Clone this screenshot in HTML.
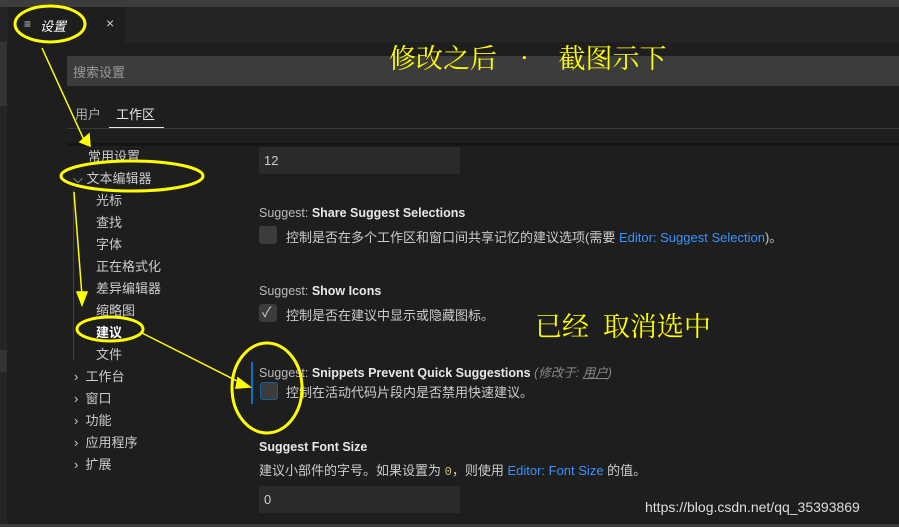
<!DOCTYPE html>
<html><head><meta charset="utf-8"><style>
*{margin:0;padding:0;box-sizing:border-box}
body{width:899px;height:527px;overflow:hidden;background:#1e1e1e;position:relative;font-family:"Liberation Sans","Noto Sans CJK SC",sans-serif;color:#ccc;font-size:13px}
.a{position:absolute;white-space:nowrap}
.t{font-size:13px;color:#ccc}
.h{font-size:12.5px;color:#bbb}
.h b{color:#e7e7e7}
.cb{position:absolute;width:18px;height:18px;background:#3c3c3c;border-radius:3px}
.link{color:#3794ff}
.y{color:#ffff00;font-family:"Noto Serif CJK SC","Liberation Serif",serif;font-size:27px}
</style></head><body>
<div class="a" style="left:0;top:0;width:899px;height:7px;background:#3c3c3c"></div>
<div class="a" style="left:0;top:7px;width:899px;height:35px;background:#252526"></div>
<div class="a" style="left:8px;top:7px;width:117px;height:35px;background:#1e1e1e"></div>
<div class="a" style="left:0;top:42px;width:7px;height:485px;background:#252526"></div>
<div class="a" style="left:0;top:42px;width:7px;height:64px;background:#333"></div>
<div class="a" style="left:0;top:350px;width:7px;height:22px;background:#333"></div>
<div class="a" style="left:24px;top:17px;color:#ccc;font-size:12px">≡</div>
<div class="a" style="left:40px;top:16px;font-style:italic;color:#fff;font-size:13px">设置</div>
<div class="a" style="left:106px;top:15px;color:#ccc;font-size:14px">×</div>
<div class="a" style="left:67px;top:56px;width:832px;height:30px;background:#3c3c3c"></div>
<div class="a" style="left:73px;top:62px;color:#999;font-size:13px">搜索设置</div>
<div class="a t" style="left:75px;top:104px;color:#aaa">用户</div>
<div class="a t" style="left:116px;top:104px;color:#e7e7e7">工作区</div>
<div class="a" style="left:109px;top:127px;width:55px;height:1px;background:#e7e7e7"></div>
<div class="a" style="left:67px;top:128px;width:832px;height:1px;background:#3a3a3a"></div>
<div class="a" style="left:67px;top:143px;width:832px;height:3px;background:#151515"></div>
<div class="a t" style="left:88px;top:146px">常用设置</div>
<div class="a t" style="left:73px;top:168px">⌵ 文本编辑器</div>
<div class="a" style="left:73px;top:190px;width:1px;height:170px;background:#444"></div>
<div class="a t" style="left:96px;top:190px">光标</div>
<div class="a t" style="left:96px;top:212px">查找</div>
<div class="a t" style="left:96px;top:234px">字体</div>
<div class="a t" style="left:96px;top:256px">正在格式化</div>
<div class="a t" style="left:96px;top:278px">差异编辑器</div>
<div class="a t" style="left:96px;top:300px">缩略图</div>
<div class="a t" style="left:96px;top:322px;font-weight:bold;color:#fff">建议</div>
<div class="a t" style="left:96px;top:344px">文件</div>
<div class="a t" style="left:74px;top:366px">›&nbsp; 工作台</div>
<div class="a t" style="left:74px;top:388px">›&nbsp; 窗口</div>
<div class="a t" style="left:74px;top:410px">›&nbsp; 功能</div>
<div class="a t" style="left:74px;top:432px">›&nbsp; 应用程序</div>
<div class="a t" style="left:74px;top:454px">›&nbsp; 扩展</div>
<div class="a" style="left:259px;top:147px;width:201px;height:27px;background:#2a2a2a"></div>
<div class="a t" style="left:264px;top:153px">12</div>
<div class="a h" style="left:259px;top:206px">Suggest: <b>Share Suggest Selections</b></div>
<div class="cb" style="left:259px;top:226px"></div>
<div class="a t" style="left:286px;top:227px">控制是否在多个工作区和窗口间共享记忆的建议选项(需要 <span class="link">Editor: Suggest Selection</span>)。</div>
<div class="a h" style="left:259px;top:284px">Suggest: <b>Show Icons</b></div>
<div class="cb" style="left:259px;top:304px"></div>
<div class="a" style="left:262px;top:302px;color:#ccc;font-size:14px">✓</div>
<div class="a t" style="left:286px;top:305px">控制是否在建议中显示或隐藏图标。</div>
<div class="a" style="left:251px;top:362px;width:2px;height:42px;background:#0e70c0"></div>
<div class="a h" style="left:259px;top:362px">Suggest: <b>Snippets Prevent Quick Suggestions</b> <i style="color:#888">(修改于: <u>用户</u>)</i></div>
<div class="cb" style="left:260px;top:382px;border:1px solid #0e639c"></div>
<div class="a t" style="left:286px;top:382px">控制在活动代码片段内是否禁用快速建议。</div>
<div class="a h" style="left:259px;top:440px"><b>Suggest Font Size</b></div>
<div class="a t" style="left:259px;top:460px">建议小部件的字号。如果设置为 <span style="color:#d7ba7d;font-family:'Liberation Mono',monospace;font-size:12px">0</span>，则使用 <span class="link">Editor: Font Size</span> 的值。</div>
<div class="a" style="left:259px;top:486px;width:201px;height:27px;background:#2a2a2a"></div>
<div class="a t" style="left:264px;top:492px">0</div>
<div class="a" style="left:0;top:524px;width:899px;height:3px;background:#3c3c3c"></div>
<div class="a y" style="left:389px;top:37px">修改之后 &nbsp;• &nbsp;&nbsp;截图示下</div>
<div class="a y" style="left:535px;top:305px">已经 &nbsp;取消选中</div>
<div class="a" style="left:645px;top:499px;color:#ddd;font-size:14px">https://blog.csdn.net/qq_35393869</div>
<svg class="a" style="left:0;top:0" width="899" height="527">
<g fill="none" stroke="#ffff00" stroke-width="3">
<ellipse cx="50" cy="24" rx="35" ry="18"/>
<ellipse cx="132" cy="176" rx="71" ry="15"/>
<ellipse cx="110" cy="329" rx="33" ry="12"/>
<ellipse cx="267" cy="388" rx="35" ry="45"/>
</g>
<g stroke="#ffff00" stroke-width="1.5" fill="#ffff00">
<line x1="42" y1="48" x2="84" y2="140"/><polygon points="80,142 90,146 89,134"/>
<line x1="74" y1="192" x2="82" y2="296"/><polygon points="77,292 82,305 87,292"/>
<line x1="142" y1="333" x2="245" y2="385"/><polygon points="238,378 250,387 236,388"/>
</g>
</svg>
</body></html>
